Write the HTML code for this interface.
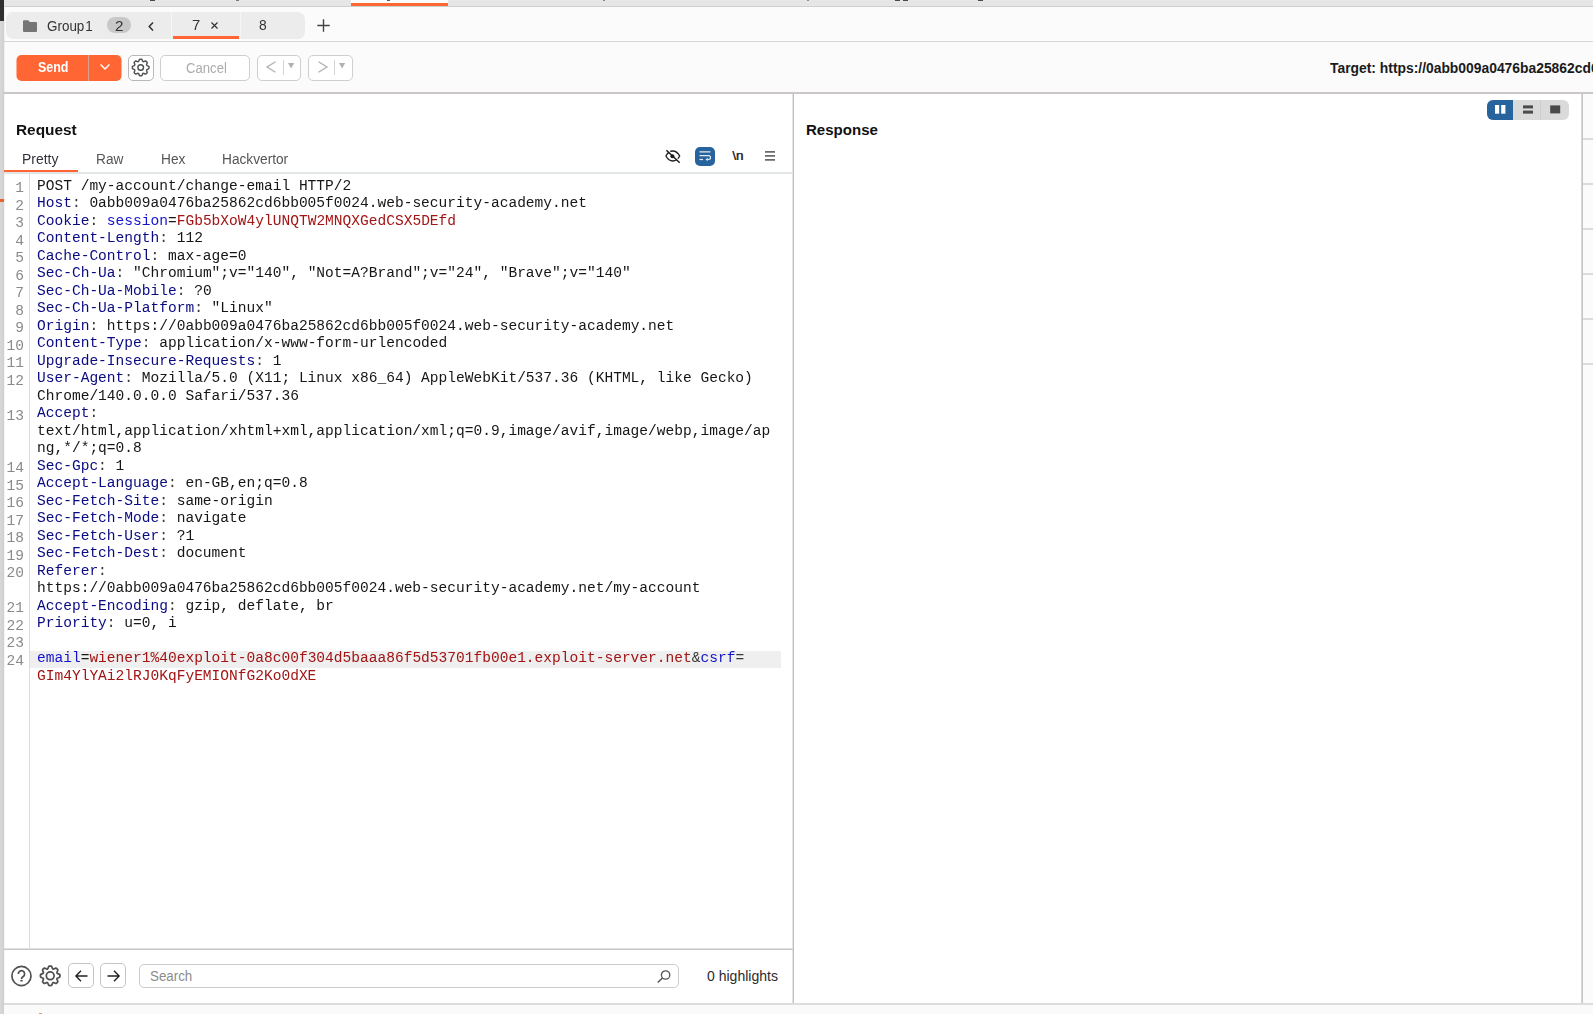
<!DOCTYPE html>
<html>
<head>
<meta charset="utf-8">
<title>Burp Suite Repeater</title>
<style>
*{box-sizing:border-box;margin:0;padding:0}
html,body{width:1593px;height:1014px;overflow:hidden;background:#fff}
body{position:relative;font-family:"Liberation Sans",sans-serif;font-size:13px;color:#222}
.abs{position:absolute}
/* ---------- frame ---------- */
#topstrip{left:0;top:0;width:1593px;height:6px;background:#e6e6e6}
#topline{left:0;top:6px;width:1593px;height:1px;background:#cbd0d0}
#tabbar{left:0;top:7px;width:1593px;height:34px;background:#fbfbfb}
#tabline{left:0;top:41px;width:1593px;height:1px;background:#d3d8d8}
#toolbar{left:0;top:42px;width:1593px;height:50px;background:#fbfbfb}
#toolline{left:0;top:92px;width:1593px;height:2px;background:#cbc7c7}
#leftdark{left:0;top:0;width:4px;height:21px;background:#303033}
#leftgray{left:0;top:21px;width:4px;height:993px;background:linear-gradient(90deg,#d9d9d9,#cfcfcf)}
#leftmark{left:0;top:199px;width:4px;height:3px;background:#e8622e}
#topsel{left:351px;top:3px;width:97px;height:3px;background:#ff6633}
/* ---------- tab group ---------- */
#tgroup{left:6px;top:12px;width:299px;height:27px;background:#ececec;border-radius:7px}
.tabtxt{font-size:14px;color:#333;top:17px;line-height:18px;white-space:nowrap}
#badge{left:107px;top:17px;width:24px;height:16px;border-radius:8px;background:#c8c8c8}
.tsep{top:12px;width:1px;height:27px;background:#f6f6f6}
#tabsel{left:173px;top:36px;width:66px;height:3px;background:#ff6633}
/* ---------- toolbar ---------- */
#send{left:16px;top:55px;width:105px;height:26px;background:#ff6633;border-radius:5px}
#senddiv{left:88px;top:55px;width:1px;height:26px;background:#d9a08c}
#sendtxt{left:38px;top:59px;font-weight:bold;font-size:13.5px;color:#fff;line-height:18px}
.btn{background:#fff;border:1px solid #cfcfcf;border-radius:5px}
#gearbtn{left:128px;top:55px;width:26px;height:26px;border-color:#bdb6b6}
#cancel{left:160px;top:55px;width:90px;height:26px}
#canceltxt{left:186px;top:59px;font-size:14px;color:#ababab;line-height:18px}
#prev{left:257px;top:55px;width:44px;height:26px}
#next{left:308px;top:55px;width:45px;height:26px}
.bsep{top:60px;width:1px;height:15px;background:#d4d4d4}
#target{left:1329px;top:58px;font-weight:bold;font-size:13px;color:#1a1a1a;line-height:18px;white-space:nowrap}
/* ---------- panels ---------- */
#vsplit{left:792px;top:94px;width:2px;height:909px;background:linear-gradient(90deg,#e6e3e3 0 50%,#c4bebe 50% 100%)}
#rline{left:1581px;top:94px;width:2px;height:909px;background:linear-gradient(90deg,#dad6d6 0 50%,#cac5c5 50% 100%)}
#rstrip{left:1583px;top:94px;width:10px;height:909px;background:#fbfbfb}
.rl{left:1583px;width:10px;height:2px;background:#dddcdc}
#botline{left:4px;top:1003px;width:1589px;height:2px;background:#dddddd}
#botstrip{left:4px;top:1005px;width:1589px;height:9px;background:#fafafa}
.ptitle{font-weight:bold;font-size:14px;color:#111;top:121px;line-height:18px}
.vt{font-size:13px;color:#4a4a4a;top:150px;line-height:16px}
#vtsel{left:4px;top:170px;width:74px;height:2px;background:#ff6633}
#vtline{left:4px;top:172px;width:789px;height:2px;background:#e2e6e6}
/* view toggle */
#tog{left:1487px;top:100px;width:82px;height:20px;background:#dadada;border-radius:6px;overflow:hidden}
#tog1{left:0;top:0;width:26px;height:20px;background:#27649e}
#togsep{left:53px;top:0;width:1px;height:20px;background:#cdcdcd}
/* ---------- code ---------- */
#gutterline{left:29px;top:174px;width:1px;height:775px;background:#dcdcdc}
.cl,.ln{position:absolute;font-family:"Liberation Mono",monospace;font-size:14.56px;line-height:17.5px;height:17.5px;white-space:pre}
.cl{left:37px;color:#111}
.ln{left:3.4px;width:20.5px;text-align:right;color:#8a8a8a}
.hl{position:absolute;left:30px;width:751px;height:17px;background:#efefef}
.h{color:#0a0a82}.t{color:#161616}.p{color:#1414cc}.v{color:#a31414}.g{color:#383838}
/* ---------- bottom bar ---------- */
#bbline{left:4px;top:948px;width:789px;height:2px;background:linear-gradient(180deg,#e2e0e0 0 50%,#cbc7c7 50% 100%)}
#bprev{left:68px;top:963px;width:26px;height:25px;border-color:#c9c2c2}
#bnext{left:100px;top:963px;width:26px;height:25px;border-color:#c9c2c2}
#search{left:139px;top:964px;width:540px;height:24px;border-color:#cfcaca}
#searchtxt{left:150px;top:967px;font-size:13.5px;color:#8c8c8c;line-height:18px}
#hltxt{left:706px;top:967px;font-size:13px;color:#2a2a2a;line-height:18px;white-space:nowrap}
.tx{position:absolute;line-height:18px;white-space:nowrap;transform-origin:0 50%}
svg{position:absolute;overflow:visible}
</style>
</head>
<body>
<!-- frame -->
<div id="topstrip" class="abs"></div>
<div id="topline" class="abs"></div>
<div id="tabbar" class="abs"></div>
<div id="tabline" class="abs"></div>
<div id="toolbar" class="abs"></div>
<div id="toolline" class="abs"></div>
<div class="abs" style="left:351px;top:0;width:97px;height:3px;background:#fbfbfb"></div>
<div id="topsel" class="abs"></div>
<div class="abs" style="left:4px;top:7px;width:1px;height:1007px;background:rgba(0,0,0,0.045)"></div>
<div class="abs" style="left:150px;top:0;width:5px;height:1px;background:#4a4a4a"></div><div class="abs" style="left:236px;top:0;width:3px;height:1px;background:#7a7a7a"></div><div class="abs" style="left:387px;top:0;width:3px;height:1px;background:#5a5a6a"></div><div class="abs" style="left:603px;top:0;width:2px;height:1px;background:#8a8a8a"></div><div class="abs" style="left:807px;top:0;width:2px;height:1px;background:#8a8a8a"></div><div class="abs" style="left:895px;top:0;width:5px;height:1px;background:#4a4a4a"></div><div class="abs" style="left:903px;top:0;width:5px;height:1px;background:#4a4a4a"></div><div class="abs" style="left:978px;top:0;width:5px;height:1px;background:#4a4a4a"></div>

<!-- tab group -->
<div id="tgroup" class="abs"></div>
<div class="abs tsep" style="left:171px"></div>
<div class="abs tsep" style="left:240px"></div>
<svg style="left:23px;top:20px" width="14" height="12" viewBox="0 0 14 12"><path d="M1 0.2h4.2l1.6 1.8H13a1 1 0 0 1 1 1v8a1 1 0 0 1-1 1H1a1 1 0 0 1-1-1V1.2a1 1 0 0 1 1-1z" fill="#757575"/></svg>
<div id="badge" class="abs"></div>
<svg style="left:148px;top:22px" width="6" height="9" viewBox="0 0 6 9"><path d="M5 0.6L1.2 4.5L5 8.4" fill="none" stroke="#333" stroke-width="1.5"/></svg>
<svg style="left:211px;top:22px" width="7" height="7" viewBox="0 0 7 7"><path d="M0.5 0.5L6.5 6.5M6.5 0.5L0.5 6.5" fill="none" stroke="#333" stroke-width="1.2"/></svg>
<div id="tabsel" class="abs"></div>
<svg style="left:317px;top:19px" width="13" height="13" viewBox="0 0 13 13"><path d="M6.5 0.3V12.7M0.3 6.5H12.7" fill="none" stroke="#444" stroke-width="1.400"/></svg>

<!-- toolbar -->
<svg style="left:0;top:0" width="1" height="1"><rect x="16.500" y="55" width="105" height="26" rx="5" fill="#ff6633"/></svg>
<div id="senddiv" class="abs"></div>
<svg style="left:100px;top:64px" width="10" height="6" viewBox="0 0 10 6"><path d="M0.6 0.6L5 5L9.4 0.6" fill="none" stroke="#fff" stroke-width="1.4"/></svg>
<div id="gearbtn" class="abs btn"></div>
<svg style="left:0;top:0" width="1" height="1"><path d="M140.43 59.21Q140.70 59.20 140.97 59.21Q141.24 59.22 141.51 59.24Q141.78 59.27 141.99 59.62Q142.20 59.97 142.35 60.37Q142.50 60.77 142.64 61.08Q142.77 61.39 142.96 61.49Q143.15 61.59 143.35 61.65Q143.55 61.72 143.87 61.59Q144.18 61.46 144.58 61.29Q144.97 61.11 145.36 61.01Q145.75 60.92 145.96 61.09Q146.17 61.26 146.37 61.45Q146.57 61.63 146.75 61.83Q146.94 62.03 147.11 62.24Q147.28 62.45 147.19 62.84Q147.09 63.23 146.91 63.62Q146.74 64.02 146.61 64.33Q146.48 64.65 146.55 64.85Q146.61 65.05 146.71 65.24Q146.81 65.43 147.12 65.56Q147.43 65.70 147.83 65.85Q148.23 66.00 148.58 66.21Q148.93 66.42 148.96 66.69Q148.98 66.96 148.99 67.23Q149.00 67.50 148.99 67.77Q148.98 68.04 148.96 68.31Q148.93 68.58 148.58 68.79Q148.23 69.00 147.83 69.15Q147.43 69.30 147.12 69.44Q146.81 69.57 146.71 69.76Q146.61 69.95 146.55 70.15Q146.48 70.35 146.61 70.67Q146.74 70.98 146.91 71.38Q147.09 71.77 147.19 72.16Q147.28 72.55 147.11 72.76Q146.94 72.97 146.75 73.17Q146.57 73.37 146.37 73.55Q146.17 73.74 145.96 73.91Q145.75 74.08 145.36 73.99Q144.97 73.89 144.58 73.71Q144.18 73.54 143.87 73.41Q143.55 73.28 143.35 73.35Q143.15 73.41 142.96 73.51Q142.77 73.61 142.64 73.92Q142.50 74.23 142.35 74.63Q142.20 75.03 141.99 75.38Q141.78 75.73 141.51 75.76Q141.24 75.78 140.97 75.79Q140.70 75.80 140.43 75.79Q140.16 75.78 139.89 75.76Q139.62 75.73 139.41 75.38Q139.20 75.03 139.05 74.63Q138.90 74.23 138.76 73.92Q138.63 73.61 138.44 73.51Q138.25 73.41 138.05 73.35Q137.85 73.28 137.53 73.41Q137.22 73.54 136.82 73.71Q136.43 73.89 136.04 73.99Q135.65 74.08 135.44 73.91Q135.23 73.74 135.03 73.55Q134.83 73.37 134.65 73.17Q134.46 72.97 134.29 72.76Q134.12 72.55 134.21 72.16Q134.31 71.77 134.49 71.38Q134.66 70.98 134.79 70.67Q134.92 70.35 134.85 70.15Q134.79 69.95 134.69 69.76Q134.59 69.57 134.28 69.44Q133.97 69.30 133.57 69.15Q133.17 69.00 132.82 68.79Q132.47 68.58 132.44 68.31Q132.42 68.04 132.41 67.77Q132.40 67.50 132.41 67.23Q132.42 66.96 132.44 66.69Q132.47 66.42 132.82 66.21Q133.17 66.00 133.57 65.85Q133.97 65.70 134.28 65.56Q134.59 65.43 134.69 65.24Q134.79 65.05 134.85 64.85Q134.92 64.65 134.79 64.33Q134.66 64.02 134.49 63.62Q134.31 63.23 134.21 62.84Q134.12 62.45 134.29 62.24Q134.46 62.03 134.65 61.83Q134.83 61.63 135.03 61.45Q135.23 61.26 135.44 61.09Q135.65 60.92 136.04 61.01Q136.43 61.11 136.82 61.29Q137.21 61.46 137.53 61.59Q137.85 61.72 138.05 61.65Q138.25 61.59 138.44 61.49Q138.63 61.39 138.76 61.08Q138.90 60.77 139.05 60.37Q139.20 59.97 139.41 59.62Q139.62 59.27 139.89 59.24Q140.16 59.22 140.43 59.21z" fill="none" stroke="#505050" stroke-width="1.45" stroke-linejoin="round"/><circle cx="140.7" cy="67.5" r="2.8" fill="none" stroke="#505050" stroke-width="1.45"/></svg>
<div id="cancel" class="abs btn"></div>
<div id="prev" class="abs btn"></div>
<div id="next" class="abs btn"></div>
<svg style="left:266px;top:61px" width="10" height="12" viewBox="0 0 10 12"><path d="M9.5 0.8L1 6L9.5 11.2" fill="none" stroke="#b0b0b0" stroke-width="1.3"/></svg>
<div class="abs bsep" style="left:283px"></div>
<svg style="left:287.8px;top:63.4px" width="7" height="6" viewBox="0 0 7 6"><path d="M0 0H6.200L3.100 5.600z" fill="#b0b0b0"/></svg>
<svg style="left:318px;top:61px" width="10" height="12" viewBox="0 0 10 12"><path d="M0.5 0.8L9 6L0.5 11.2" fill="none" stroke="#b0b0b0" stroke-width="1.3"/></svg>
<div class="abs bsep" style="left:334px"></div>
<svg style="left:338.900px;top:63.400px" width="7" height="6" viewBox="0 0 7 6"><path d="M0 0H6.200L3.100 5.600z" fill="#b0b0b0"/></svg>

<!-- panels -->
<div id="vsplit" class="abs"></div>
<div id="rline" class="abs"></div>
<div id="rstrip" class="abs"></div>
<div class="abs rl" style="top:138px"></div>
<div class="abs rl" style="top:183px"></div>
<div class="abs rl" style="top:228px"></div>
<div class="abs rl" style="top:273px"></div>
<div class="abs rl" style="top:318px"></div>
<div class="abs rl" style="top:363px"></div>
<div id="vtline" class="abs"></div>
<div id="vtsel" class="abs"></div>

<!-- view toggle -->
<div id="tog" class="abs"><div id="tog1" class="abs"></div><div id="togsep" class="abs"></div></div>
<svg style="left:1495px;top:105px" width="11" height="9" viewBox="0 0 11 9"><rect x="0" y="0" width="4.2" height="8.7" fill="#fff"/><rect x="6.2" y="0" width="4.2" height="8.7" fill="#fff"/></svg>
<svg style="left:1523px;top:105px" width="10" height="9" viewBox="0 0 10 9"><rect x="0" y="0.4" width="10" height="3" fill="#4a4a4a"/><rect x="0" y="5.6" width="10" height="3" fill="#4a4a4a"/></svg>
<svg style="left:1550px;top:105px" width="10" height="9" viewBox="0 0 10 9"><rect x="0.2" y="0.4" width="10" height="8" fill="#4a4a4a"/></svg>

<!-- request view icons -->
<svg id="eye" style="left:0;top:0" width="1" height="1"><path d="M665.900 156C668 152.300 670.500 151 672.800 151S677.600 152.300 679.700 156C677.600 159.700 675.100 161 672.800 161S668 159.700 665.900 156z" fill="none" stroke="#1e1e1e" stroke-width="1.350"/><path d="M667.200 149.600L680.500 162.200" stroke="#fff" stroke-width="1.400"/><circle cx="672.400" cy="156.300" r="2" fill="#1e1e1e"/><path d="M666.400 150.200L679.700 162.800" stroke="#1e1e1e" stroke-width="1.500"/></svg>
<div class="abs" style="left:695px;top:147px;width:20px;height:19px;border-radius:5px;background:#27649e"></div>
<svg style="left:0;top:0" width="1" height="1"><path d="M699.500 151.800H710.400M699.500 155.700H708.600a1.900 1.900 0 0 1 0 3.800H707.300" fill="none" stroke="#e3ecf5" stroke-width="1.200"/><path d="M699.500 159.500H703" stroke="#e3ecf5" stroke-width="1.200"/><path d="M707.700 157.800L705.500 159.500L707.700 161.200z" fill="#e3ecf5"/></svg>
<div class="abs" style="left:732.3px;top:148px;font-size:13.5px;line-height:16px;color:#2e2e2e;letter-spacing:-0.2px;text-shadow:0.3px 0 0 #2e2e2e">\n</div>
<svg style="left:765.3px;top:151.2px" width="10" height="10" viewBox="0 0 10 10"><path d="M0 0.900H10M0 4.900H10M0 8.800H10" stroke="#6a6a6a" stroke-width="1.700"/></svg>

<!-- code -->
<div id="gutterline" class="abs"></div>
<div id="code" style="position:absolute;left:0;top:0;width:793px;height:949px;will-change:transform">
<div class="ln" style="top:180.05px">1</div>
<div class="cl" style="top:177.75px"><span class="t">POST /my-account/change-email HTTP/2</span></div>
<div class="ln" style="top:197.55px">2</div>
<div class="cl" style="top:195.25px"><span class="h">Host</span><span class="g">:</span><span class="t"> 0abb009a0476ba25862cd6bb005f0024.web-security-academy.net</span></div>
<div class="ln" style="top:215.05px">3</div>
<div class="cl" style="top:212.75px"><span class="h">Cookie</span><span class="g">:</span><span class="t"> </span><span class="p">session</span><span class="t">=</span><span class="v">FGb5bXoW4ylUNQTW2MNQXGedCSX5DEfd</span></div>
<div class="ln" style="top:232.55px">4</div>
<div class="cl" style="top:230.25px"><span class="h">Content-Length</span><span class="g">:</span><span class="t"> 112</span></div>
<div class="ln" style="top:250.05px">5</div>
<div class="cl" style="top:247.75px"><span class="h">Cache-Control</span><span class="g">:</span><span class="t"> max-age=0</span></div>
<div class="ln" style="top:267.55px">6</div>
<div class="cl" style="top:265.25px"><span class="h">Sec-Ch-Ua</span><span class="g">:</span><span class="t"> "Chromium";v="140", "Not=A?Brand";v="24", "Brave";v="140"</span></div>
<div class="ln" style="top:285.05px">7</div>
<div class="cl" style="top:282.75px"><span class="h">Sec-Ch-Ua-Mobile</span><span class="g">:</span><span class="t"> ?0</span></div>
<div class="ln" style="top:302.55px">8</div>
<div class="cl" style="top:300.25px"><span class="h">Sec-Ch-Ua-Platform</span><span class="g">:</span><span class="t"> "Linux"</span></div>
<div class="ln" style="top:320.05px">9</div>
<div class="cl" style="top:317.75px"><span class="h">Origin</span><span class="g">:</span><span class="t"> https://0abb009a0476ba25862cd6bb005f0024.web-security-academy.net</span></div>
<div class="ln" style="top:337.55px">10</div>
<div class="cl" style="top:335.25px"><span class="h">Content-Type</span><span class="g">:</span><span class="t"> application/x-www-form-urlencoded</span></div>
<div class="ln" style="top:355.05px">11</div>
<div class="cl" style="top:352.75px"><span class="h">Upgrade-Insecure-Requests</span><span class="g">:</span><span class="t"> 1</span></div>
<div class="ln" style="top:372.55px">12</div>
<div class="cl" style="top:370.25px"><span class="h">User-Agent</span><span class="g">:</span><span class="t"> Mozilla/5.0 (X11; Linux x86_64) AppleWebKit/537.36 (KHTML, like Gecko)</span></div>
<div class="cl" style="top:387.75px"><span class="t">Chrome/140.0.0.0 Safari/537.36</span></div>
<div class="ln" style="top:407.55px">13</div>
<div class="cl" style="top:405.25px"><span class="h">Accept</span><span class="g">:</span></div>
<div class="cl" style="top:422.75px"><span class="t">text/html,application/xhtml+xml,application/xml;q=0.9,image/avif,image/webp,image/ap</span></div>
<div class="cl" style="top:440.25px"><span class="t">ng,*/*;q=0.8</span></div>
<div class="ln" style="top:460.05px">14</div>
<div class="cl" style="top:457.75px"><span class="h">Sec-Gpc</span><span class="g">:</span><span class="t"> 1</span></div>
<div class="ln" style="top:477.55px">15</div>
<div class="cl" style="top:475.25px"><span class="h">Accept-Language</span><span class="g">:</span><span class="t"> en-GB,en;q=0.8</span></div>
<div class="ln" style="top:495.05px">16</div>
<div class="cl" style="top:492.75px"><span class="h">Sec-Fetch-Site</span><span class="g">:</span><span class="t"> same-origin</span></div>
<div class="ln" style="top:512.55px">17</div>
<div class="cl" style="top:510.25px"><span class="h">Sec-Fetch-Mode</span><span class="g">:</span><span class="t"> navigate</span></div>
<div class="ln" style="top:530.05px">18</div>
<div class="cl" style="top:527.75px"><span class="h">Sec-Fetch-User</span><span class="g">:</span><span class="t"> ?1</span></div>
<div class="ln" style="top:547.55px">19</div>
<div class="cl" style="top:545.25px"><span class="h">Sec-Fetch-Dest</span><span class="g">:</span><span class="t"> document</span></div>
<div class="ln" style="top:565.05px">20</div>
<div class="cl" style="top:562.75px"><span class="h">Referer</span><span class="g">:</span></div>
<div class="cl" style="top:580.25px"><span class="t">https://0abb009a0476ba25862cd6bb005f0024.web-security-academy.net/my-account</span></div>
<div class="ln" style="top:600.05px">21</div>
<div class="cl" style="top:597.75px"><span class="h">Accept-Encoding</span><span class="g">:</span><span class="t"> gzip, deflate, br</span></div>
<div class="ln" style="top:617.55px">22</div>
<div class="cl" style="top:615.25px"><span class="h">Priority</span><span class="g">:</span><span class="t"> u=0, i</span></div>
<div class="ln" style="top:635.05px">23</div>
<div class="hl" style="top:651.0px"></div>
<div class="ln" style="top:652.55px">24</div>
<div class="cl" style="top:650.25px"><span class="p">email</span><span class="t">=</span><span class="v">wiener1%40exploit-0a8c00f304d5baaa86f5d53701fb00e1.exploit-server.net</span><span class="g">&amp;</span><span class="p">csrf</span><span class="g">=</span></div>
<div class="cl" style="top:667.75px"><span class="v">GIm4YlYAi2lRJ0KqFyEMIONfG2Ko0dXE</span></div>
</div>

<!-- bottom bar -->
<div id="bbline" class="abs"></div>
<svg style="left:0;top:0" width="1" height="1"><circle cx="21.45" cy="976" r="9.55" fill="none" stroke="#505050" stroke-width="1.7"/><path d="M18.3 974a3.150 3.150 0 1 1 4.900 2.500c-1.150 .750-1.700 1.300-1.700 2.500" fill="none" stroke="#505050" stroke-width="1.700"/><ellipse cx="21.500" cy="980.700" rx="1.300" ry="0.900" fill="#505050"/></svg>
<svg style="left:0;top:0" width="1" height="1"><path d="M49.88 966.06Q50.20 966.05 50.52 966.06Q50.84 966.07 51.16 966.10Q51.47 966.13 51.71 966.57Q51.95 967.00 52.12 967.50Q52.29 968.00 52.44 968.39Q52.58 968.78 52.80 968.90Q53.01 969.01 53.25 969.08Q53.48 969.15 53.86 968.98Q54.23 968.81 54.71 968.58Q55.18 968.34 55.66 968.20Q56.14 968.06 56.38 968.27Q56.63 968.47 56.86 968.69Q57.09 968.91 57.31 969.14Q57.53 969.37 57.73 969.62Q57.94 969.86 57.80 970.34Q57.66 970.82 57.42 971.29Q57.19 971.76 57.02 972.14Q56.85 972.52 56.92 972.75Q56.99 972.99 57.10 973.20Q57.22 973.42 57.61 973.56Q58.00 973.71 58.50 973.88Q59.00 974.05 59.43 974.29Q59.87 974.53 59.90 974.84Q59.93 975.16 59.94 975.48Q59.95 975.80 59.94 976.12Q59.93 976.44 59.90 976.76Q59.87 977.07 59.43 977.31Q59.00 977.55 58.50 977.72Q58.00 977.89 57.61 978.04Q57.22 978.18 57.10 978.40Q56.99 978.61 56.92 978.85Q56.85 979.08 57.02 979.46Q57.19 979.83 57.42 980.31Q57.66 980.78 57.80 981.26Q57.94 981.74 57.73 981.98Q57.53 982.23 57.31 982.46Q57.09 982.69 56.86 982.91Q56.63 983.13 56.38 983.33Q56.14 983.54 55.66 983.40Q55.18 983.26 54.71 983.02Q54.23 982.79 53.86 982.62Q53.48 982.45 53.25 982.52Q53.01 982.59 52.80 982.70Q52.58 982.82 52.44 983.21Q52.29 983.60 52.12 984.10Q51.95 984.60 51.71 985.03Q51.47 985.47 51.16 985.50Q50.84 985.53 50.52 985.54Q50.20 985.55 49.88 985.54Q49.56 985.53 49.24 985.50Q48.93 985.47 48.69 985.03Q48.45 984.60 48.28 984.10Q48.11 983.60 47.96 983.21Q47.82 982.82 47.60 982.70Q47.39 982.59 47.15 982.52Q46.92 982.45 46.54 982.62Q46.17 982.79 45.69 983.02Q45.22 983.26 44.74 983.40Q44.26 983.54 44.02 983.33Q43.77 983.13 43.54 982.91Q43.31 982.69 43.09 982.46Q42.87 982.23 42.67 981.98Q42.46 981.74 42.60 981.26Q42.74 980.78 42.98 980.31Q43.21 979.83 43.38 979.46Q43.55 979.08 43.48 978.85Q43.41 978.61 43.30 978.40Q43.18 978.18 42.79 978.04Q42.40 977.89 41.90 977.72Q41.40 977.55 40.97 977.31Q40.53 977.07 40.50 976.76Q40.47 976.44 40.46 976.12Q40.45 975.80 40.46 975.48Q40.47 975.16 40.50 974.84Q40.53 974.53 40.97 974.29Q41.40 974.05 41.90 973.88Q42.40 973.71 42.79 973.56Q43.18 973.42 43.30 973.20Q43.41 972.99 43.48 972.75Q43.55 972.52 43.38 972.14Q43.21 971.76 42.98 971.29Q42.74 970.82 42.60 970.34Q42.46 969.86 42.67 969.62Q42.87 969.37 43.09 969.14Q43.31 968.91 43.54 968.69Q43.77 968.47 44.02 968.27Q44.26 968.06 44.74 968.20Q45.22 968.34 45.69 968.58Q46.16 968.81 46.54 968.98Q46.92 969.15 47.15 969.08Q47.39 969.01 47.60 968.90Q47.82 968.78 47.96 968.39Q48.11 968.00 48.28 967.50Q48.45 967.00 48.69 966.57Q48.93 966.13 49.24 966.10Q49.56 966.07 49.88 966.06z" fill="none" stroke="#505050" stroke-width="1.75" stroke-linejoin="round"/><circle cx="50.2" cy="975.8" r="3.9" fill="none" stroke="#505050" stroke-width="1.75"/></svg>
<div id="bprev" class="abs btn"></div>
<div id="bnext" class="abs btn"></div>
<svg style="left:75px;top:969.5px" width="13" height="12" viewBox="0 0 13 12"><path d="M12.500 6H1.200M6 0.800L0.900 6L6 11.200" fill="none" stroke="#222" stroke-width="1.400"/></svg>
<svg style="left:107px;top:969.5px" width="13" height="12" viewBox="0 0 13 12"><path d="M0.500 6H11.800M7 0.800L12.100 6L7 11.200" fill="none" stroke="#222" stroke-width="1.400"/></svg>
<div id="search" class="abs btn"></div>
<svg style="left:657px;top:970px" width="14" height="13" viewBox="0 0 14 13"><circle cx="8.600" cy="5" r="4.200" fill="none" stroke="#555" stroke-width="1.300"/><path d="M5.500 8L0.700 12.500" stroke="#555" stroke-width="1.500"/></svg>
<div id="botline" class="abs"></div>
<div id="botstrip" class="abs"></div>

<!-- ui texts -->
<div class="tx" style="left:46.9px;top:16.8px;font-size:14px;color:#333;transform:scaleX(0.9596);word-spacing:-3px">Group 1</div>
<div class="tx" style="left:115.0px;top:16.8px;font-size:14px;color:#333;transform:scaleX(1.0857)">2</div>
<div class="tx" style="left:191.6px;top:15.8px;font-size:14px;color:#333;transform:scaleX(1.0571)">7</div>
<div class="tx" style="left:258.9px;top:15.8px;font-size:14px;color:#333;transform:scaleX(0.9875)">8</div>
<div class="tx" style="left:37.9px;top:58.2px;font-size:14.6px;color:#fff;transform:scaleX(0.8543);font-weight:bold">Send</div>
<div class="tx" style="left:185.9px;top:58.6px;font-size:14px;color:#ababab;transform:scaleX(0.9372)">Cancel</div>
<div class="tx" style="left:15.69px;top:120.9px;font-size:15.2px;color:#111;transform:scaleX(1.0136);font-weight:bold">Request</div>
<div class="tx" style="left:806.01px;top:120.9px;font-size:15.2px;color:#111;transform:scaleX(0.9903);font-weight:bold">Response</div>
<div class="tx" style="left:22.31px;top:149.5px;font-size:14px;color:#33333c;transform:scaleX(0.9944)">Pretty</div>
<div class="tx" style="left:96.22px;top:149.5px;font-size:14px;color:#555;transform:scaleX(0.9778)">Raw</div>
<div class="tx" style="left:160.82px;top:149.5px;font-size:14px;color:#555;transform:scaleX(0.9792)">Hex</div>
<div class="tx" style="left:222.42px;top:149.5px;font-size:14px;color:#555;transform:scaleX(0.9776)">Hackvertor</div>
<div class="tx" style="left:149.55px;top:966.8px;font-size:14px;color:#8c8c8c;transform:scaleX(0.9535)">Search</div>
<div class="tx" style="left:706.7px;top:966.6px;font-size:14px;color:#2a2a2a;transform:scaleX(1.0014)">0 highlights</div>
<div class="tx" style="left:1330.0px;top:58.6px;font-size:14.5px;color:#1a1a1a;transform:scaleX(0.9559);font-weight:bold">Target: https://0abb009a0476ba25862cd6bb005f0024.web-security-academy.net</div>

<div class="abs" style="left:39px;top:1013px;width:2px;height:1px;background:#e9a06a"></div><div class="abs" style="left:41px;top:1013px;width:1px;height:1px;background:#7aa0d8"></div>
<!-- left edge -->
<div id="leftgray" class="abs"></div>
<div id="leftdark" class="abs"></div>
<div id="leftmark" class="abs"></div>
</body>
</html>
